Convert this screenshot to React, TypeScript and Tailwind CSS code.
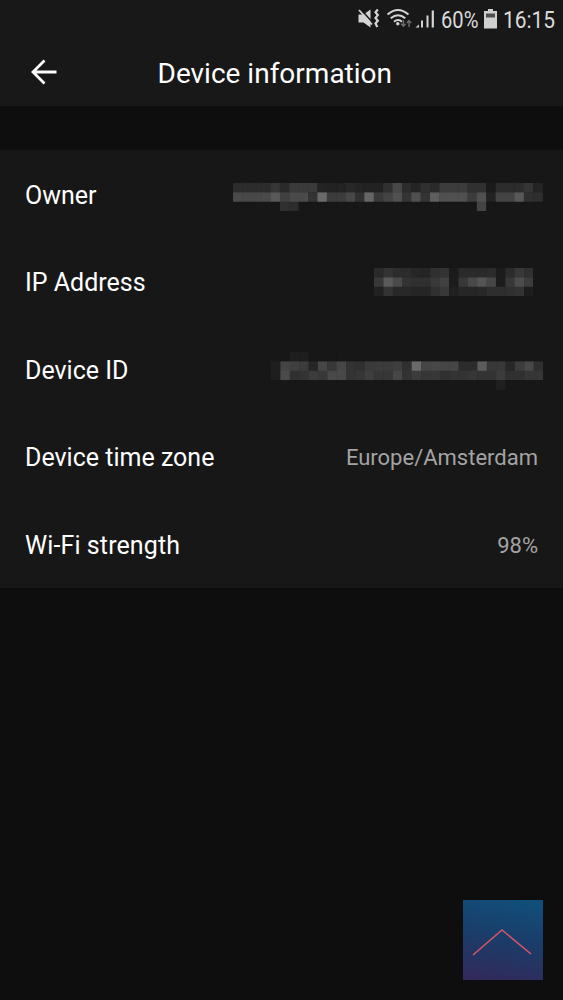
const OWNER = [
  '2c 2c 2c 2c 36 2a 3a 3a 3a 23 22 22 28 23 22 22 30 48 2c 25 30 2a 3c 3c 3c 30 30 1a 2c 2c 2c 35 24',
  '4a 48 48 4a 58 40 4a 4a 33 6a 3c 3c 48 30 66 3a 44 50 34 50 34 5e 50 50 50 3c 50 22 44 44 58 30 2e',
  '17 17 17 17 17 30 2c 17 17 17 17 17 17 17 17 17 17 17 17 17 17 17 17 17 17 17 44 17 17 17 17 17 17',
]

const IP_ADDRESS = [
  '2a 33 2c 2c 26 24 30 33 1b 2a 2a 2a 2c 1c 2c 38 30',
  '38 5a 4a 33 30 30 38 40 1c 38 48 55 46 1c 38 4c 3c',
  '22 33 28 28 25 25 30 38 20 26 26 28 2e 2e 30 33 1d',
]

const DEVICE_ID = [
  '17 17 1e 1e 17 17 17 17 17 17 17 17 17 17 17 17 17 17 17 17 17 17 17 17 17 17 17 17 17',
  '1e 44 40 3c 26 46 38 46 33 30 3a 3c 3c 3e 30 6a 46 48 46 46 2c 2c 5c 38 38 28 3c 48 30',
  '1e 4a 30 33 3c 38 48 48 33 36 3e 36 36 46 33 3c 36 38 30 33 33 36 33 33 3c 30 30 36 36',
  '17 17 17 17 17 17 17 17 17 17 17 17 17 17 17 17 17 17 17 17 17 17 17 17 20 17 17 17 17',
]

const CELL = 9.38

function Mosaic({ rows, className }: { rows: string[]; className: string }) {
  const columns = rows[0].split(' ').length

  return (
    <svg
      className={className}
      width={columns * CELL}
      height={rows.length * CELL}
      aria-hidden="true"
    >
      {rows.map((row, y) =>
        row.split(' ').map((shade, x) => (
          <rect
            key={`${x}-${y}`}
            x={x * CELL}
            y={y * CELL}
            width={CELL + 0.3}
            height={CELL + 0.3}
            fill={`#${shade}${shade}${shade}`}
          />
        ))
      )}
    </svg>
  )
}

function StatusIcons() {
  return (
    <svg width="78" height="24" viewBox="358 7 78 24" fill="none" className="shrink-0">
      {/* Vibrate / muted */}
      <path d="M358.500 14.500h5l7-5v18l-7-5h-5z" fill="#d4d4d4" />
      <path d="M360.500 9l12.500 14" stroke="#181818" strokeWidth="1.600" />
      <path d="M359 10l13 14.500" stroke="#d4d4d4" strokeWidth="1.800" />
      <path
        d="M377.800 9.500l-2.300 2.800 2.300 2.800-2.300 2.800 2.300 2.800-2.300 2.800 1.800 3.500"
        stroke="#d4d4d4"
        strokeWidth="2.200"
      />
      {/* Wi-Fi */}
      <path
        d="M387.500 14.500q10.500-9 21 0M390.700 18.200q7.300-6 14.600 0M394 21.800q4-3.500 8 0"
        stroke="#d4d4d4"
        strokeWidth="2"
      />
      <circle cx="397.800" cy="23.800" r="1.700" fill="#d4d4d4" />
      <path
        d="M403.400 20v6M401.200 23.800l2.200 2.500 2.200-2.500M409 27v-6.500M406.800 23l2.200-2.500 2.200 2.500"
        stroke="#6c6c6c"
        strokeWidth="1.400"
      />
      {/* Signal */}
      <path
        d="M415.500 27.500h3.500v-3zM421 20.500h2v7h-2zM426.500 15.500h2v12h-2zM431.700 10.500h2.200v17h-2.200z"
        fill="#d4d4d4"
      />
    </svg>
  )
}

function StatusBar() {
  return (
    <div className="flex h-[38px] items-center bg-[#181818] pl-[358px] text-2xl text-[#dadada]">
      <StatusIcons />
      <div className="ml-[5px] w-[38px] shrink-0 pt-px">
        <span className="inline-block origin-left scale-x-[0.84]">60%</span>
      </div>
      <svg width="13" height="20" viewBox="0 0 13 20" className="ml-[5px] shrink-0">
        <path d="M4 0h5v2h4v17.500H0V2h4z" fill="#d0d0d0" />
        <path d="M2 4.500h9v4H2z" fill="#4e4e4e" />
      </svg>
      <div className="ml-[6px] w-[53px] shrink-0 pt-px">
        <span className="inline-block origin-left scale-x-[0.87]">16:15</span>
      </div>
    </div>
  )
}

export default function App() {
  return (
    <div className="flex h-[1000px] w-[563px] flex-col overflow-hidden bg-[#0e0e0e] font-['Roboto',sans-serif] text-white">
      <StatusBar />

      {/* Header */}
      <header className="flex h-[68px] items-center bg-[#181818] pl-[31px]">
        <svg width="27" height="26" viewBox="0 0 27 26" fill="none" className="shrink-0">
          <path d="M13.500 1.500L2 13l11.500 11.500M2 13h23.500" stroke="#fff" strokeWidth="2.800" />
        </svg>
        <h1 className="ml-[99.5px] pt-1 text-[28px] whitespace-nowrap">Device information</h1>
      </header>

      {/* Details */}
      <main className="mt-11 flex h-[437.5px] flex-col bg-[#171717] pl-[25px] text-[25px]">
        <div className="flex h-[87.5px] items-center justify-between pr-[20px]">
          <span className="pt-[3px]">Owner</span>
          <Mosaic rows={OWNER} className="mt-[7px]" />
        </div>
        <div className="flex h-[87.5px] items-center justify-between pr-[30px]">
          <span className="pt-[3px]">IP Address</span>
          <Mosaic rows={IP_ADDRESS} className="mt-[2px]" />
        </div>
        <div className="flex h-[87.5px] items-center justify-between pr-[20px]">
          <span className="pt-[3px]">Device ID</span>
          <Mosaic rows={DEVICE_ID} className="mt-[5px]" />
        </div>
        <div className="flex h-[87.5px] items-center justify-between pr-[25px]">
          <span className="pt-[3px]">Device time zone</span>
          <span className="pt-[3px] text-[22px] text-[#a3a3a3]">Europe/Amsterdam</span>
        </div>
        <div className="flex h-[87.5px] items-center justify-between pr-[25px]">
          <span className="pt-[3px] tracking-[0.1px]">Wi-Fi strength</span>
          <span className="pt-[3px] text-[22px] text-[#a3a3a3]">98%</span>
        </div>
      </main>

      {/* Scroll to top */}
      <button className="mt-auto mr-5 mb-5 size-20 self-end bg-linear-[190deg] from-[#10507c] via-[#1b3c69] to-[#33295a]">
        <svg width="80" height="80" viewBox="0 0 80 80" fill="none">
          <path d="M10 55l29-25 29 24" stroke="#dc5566" strokeWidth="1.500" />
        </svg>
      </button>
    </div>
  )
}
